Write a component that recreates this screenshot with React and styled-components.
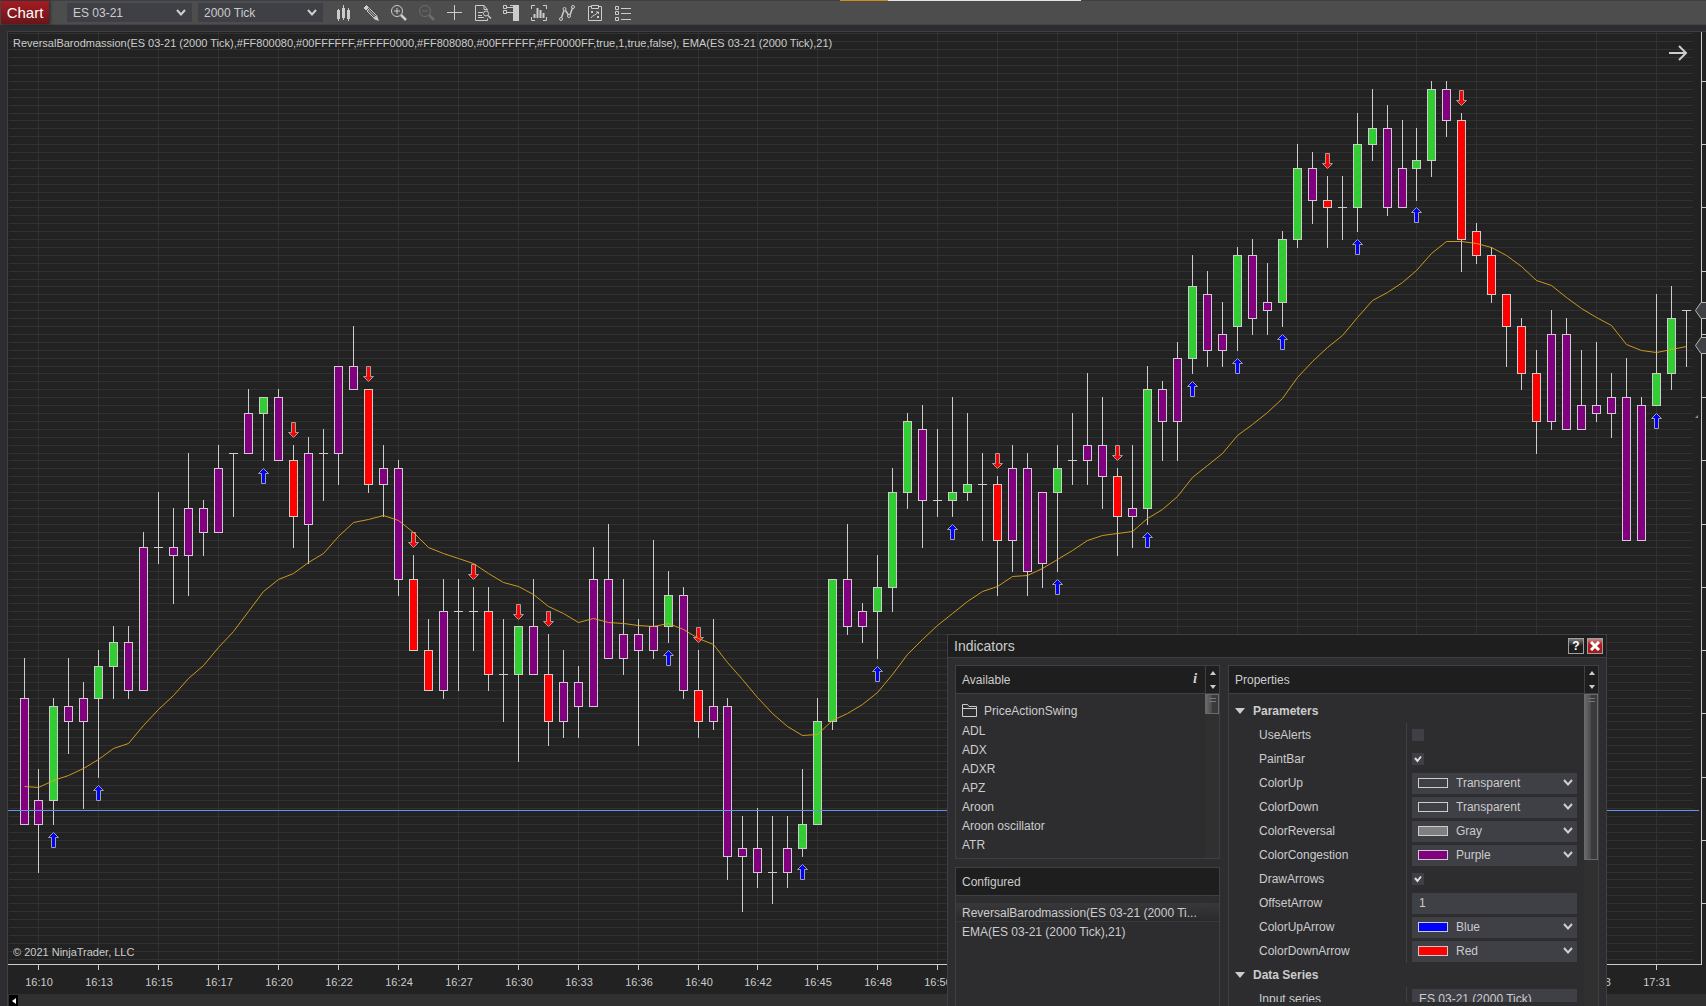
import React, { useState } from "react";
import styled, { createGlobalStyle, css } from "styled-components";

const GlobalStyle = createGlobalStyle`
    * {
        box-sizing: border-box;
    }

    body {
        margin: 0;
        overflow: hidden;
        background: #2d2d30;
        color: #cccccc;
        font-family: "Liberation Sans", Arial, sans-serif;
        font-size: 12px;
    }

    button, input, select {
        font: inherit;
        color: inherit;
    }
`;

const COLORS = { P: "#800080", G: "#32cd32", R: "#ff0000" };

// kind, high, body top, body bottom, low, arrow
const BARS = [
    ["P", 659, 698, 824, 824],
    ["P", 770, 800, 824, 873],
    ["G", 699, 706, 800, 824, "up"],
    ["P", 659, 706, 721, 754],
    ["P", 683, 698, 721, 809],
    ["G", 651, 666, 698, 778, "up"],
    ["G", 627, 642, 666, 699],
    ["P", 627, 642, 690, 699],
    ["P", 533, 547, 690, 690],
    ["D", 493, 547, 547, 564],
    ["P", 509, 547, 556, 604],
    ["P", 454, 508, 556, 596],
    ["P", 501, 508, 532, 556],
    ["P", 446, 468, 532, 532],
    ["D", 453, 453, 453, 517],
    ["P", 390, 413, 453, 453],
    ["G", 397, 397, 413, 461, "up"],
    ["P", 390, 397, 460, 460],
    ["R", 446, 460, 516, 548, "down"],
    ["P", 438, 453, 524, 564],
    ["D", 430, 453, 453, 501],
    ["P", 366, 366, 453, 485],
    ["P", 327, 366, 389, 389],
    ["R", 389, 389, 484, 492, "down"],
    ["P", 446, 468, 484, 517],
    ["P", 461, 468, 579, 596],
    ["R", 556, 579, 650, 650, "down"],
    ["R", 620, 650, 690, 690],
    ["P", 580, 611, 690, 699],
    ["D", 580, 611, 611, 691],
    ["D", 588, 611, 611, 651, "down"],
    ["R", 588, 611, 674, 691],
    ["D", 620, 674, 674, 722],
    ["G", 626, 626, 674, 762, "down"],
    ["P", 580, 626, 674, 674],
    ["R", 635, 674, 721, 746, "down"],
    ["P", 651, 682, 721, 738],
    ["P", 667, 682, 706, 738],
    ["P", 548, 579, 706, 706],
    ["P", 525, 579, 658, 658],
    ["P", 580, 634, 658, 675],
    ["P", 620, 634, 650, 746],
    ["P", 540, 626, 650, 659],
    ["G", 572, 595, 626, 643, "up"],
    ["P", 588, 595, 690, 699],
    ["R", 651, 690, 721, 738, "down"],
    ["P", 620, 706, 721, 730],
    ["P", 699, 706, 856, 881],
    ["P", 817, 848, 856, 912],
    ["P", 809, 848, 872, 888],
    ["D", 817, 872, 872, 904],
    ["P", 817, 848, 872, 888],
    ["G", 770, 824, 848, 857, "up"],
    ["G", 699, 721, 824, 824],
    ["G", 579, 579, 721, 730],
    ["P", 525, 579, 626, 635],
    ["P", 604, 611, 626, 642],
    ["G", 556, 587, 611, 659, "up"],
    ["G", 469, 492, 587, 612],
    ["G", 414, 421, 492, 509],
    ["P", 406, 429, 500, 548],
    ["D", 430, 500, 500, 517],
    ["G", 398, 492, 500, 517, "up"],
    ["G", 414, 484, 492, 501],
    ["D", 454, 484, 484, 540],
    ["R", 477, 484, 540, 596, "down"],
    ["P", 446, 468, 540, 572],
    ["P", 454, 468, 572, 596],
    ["P", 492, 492, 564, 588],
    ["G", 446, 468, 492, 572, "up"],
    ["D", 414, 460, 460, 485],
    ["P", 374, 445, 460, 485],
    ["P", 398, 445, 476, 509],
    ["R", 469, 476, 516, 556, "down"],
    ["P", 446, 508, 516, 548],
    ["G", 367, 389, 508, 525, "up"],
    ["P", 382, 389, 421, 461],
    ["P", 343, 358, 421, 461],
    ["G", 256, 286, 358, 374, "up"],
    ["P", 272, 294, 350, 367],
    ["P", 303, 334, 350, 367],
    ["G", 248, 255, 326, 351, "up"],
    ["P", 240, 255, 318, 335],
    ["P", 264, 302, 310, 335],
    ["G", 232, 239, 302, 327, "up"],
    ["G", 145, 168, 239, 248],
    ["P", 153, 168, 199, 224],
    ["R", 177, 199, 207, 248, "down"],
    ["D", 177, 207, 207, 240],
    ["G", 113, 144, 207, 232, "up"],
    ["G", 90, 128, 144, 161],
    ["P", 106, 128, 207, 216],
    ["P", 121, 168, 207, 207],
    ["G", 129, 160, 168, 200, "up"],
    ["G", 82, 89, 160, 177],
    ["P", 82, 89, 120, 137],
    ["R", 113, 120, 239, 272, "down"],
    ["R", 224, 231, 255, 264],
    ["R", 248, 255, 294, 303],
    ["R", 294, 294, 326, 367],
    ["R", 319, 326, 373, 390],
    ["R", 351, 373, 422, 454],
    ["P", 311, 334, 422, 430],
    ["P", 319, 334, 429, 429],
    ["P", 351, 405, 429, 429],
    ["P", 343, 405, 413, 422],
    ["P", 374, 397, 413, 438],
    ["P", 359, 397, 539, 539],
    ["P", 398, 405, 539, 539],
    ["G", 295, 373, 405, 405, "up"],
    ["G", 287, 318, 373, 390],
    ["D", 310, 310, 310, 367],
];

const EMA = [
    786, 787, 780, 775, 768, 759, 748, 743, 725, 709, 695, 678, 665, 647, 631, 611,
    591, 579, 573, 562, 553, 536, 522, 519, 515, 520, 532, 547, 553, 558, 563, 573,
    582, 586, 594, 606, 613, 622, 618, 622, 623, 625, 626, 623, 629, 638, 644, 662,
    679, 697, 713, 726, 735, 734, 720, 713, 704, 692, 674, 654, 639, 625, 613, 601,
    591, 586, 576, 575, 568, 559, 550, 540, 535, 533, 531, 518, 509, 496, 477, 465,
    453, 435, 424, 412, 398, 377, 361, 347, 335, 317, 300, 292, 282, 270, 253, 241,
    241, 243, 247, 255, 266, 280, 285, 297, 308, 317, 325, 344, 350, 352, 349, 346,
];

// one slot per vertical grid line, an empty slot has no label
const TIMES = [
    "16:10", "16:13", "16:15", "16:17", "16:20", "16:22", "16:24", "16:27", "16:30",
    "16:33", "16:36", "16:40", "16:42", "16:45", "16:48", "16:50", "", "", "", "",
    "", "", "", "", "", "", "17:23", "17:31",
];

const TICK = 7.9065;
const rowOf = (y) => Math.round((y - 81) / TICK);
const rowY = (row) => Math.floor(81.43 + TICK * row);
const barX = (i) => 24 + 15 * i - Math.ceil(i / 46);

const ROWS = Array.from({ length: 118 }, (_, i) => i - 6);
const COLUMNS = TIMES.map((time, i) => ({ time, x: barX(1 + i * 4) }));

const ArrowMark = ({ x, y, dir }) => (
    <path
        transform={`translate(${x + 0.5} ${y + 0.5}) scale(1 ${dir === "up" ? 1 : -1})`}
        d="M0 0 L5 5 H2 V15 H-2 V5 H-5 Z"
        fill={dir === "up" ? "#0000ff" : "#ff0000"}
        stroke="#a0a0a0"
        strokeWidth="1"
    />
);

const Candle = ({ x, bar }) => {
    const [kind, high, top, bottom, low, arrow] = bar;
    const [h, t, b, l] = [high, top, bottom, low].map((y) => rowY(rowOf(y)));

    return (
        <g>
            <path d={`M${x + 0.5} ${h} V${l + 1}`} stroke="#cccccc" shapeRendering="crispEdges" />
            {kind === "D" ? (
                <path d={`M${x - 4} ${t + 0.5} h9`} stroke="#cccccc" shapeRendering="crispEdges" />
            ) : (
                <rect x={x - 3.5} y={t + 0.5} width="8" height={b - t} fill={COLORS[kind]} stroke="#cccccc" shapeRendering="crispEdges" />
            )}
            {arrow === "up" && <ArrowMark x={x} y={rowY(rowOf(low) + 1)} dir="up" />}
            {arrow === "down" && <ArrowMark x={x} y={rowY(rowOf(high) - 1)} dir="down" />}
        </g>
    );
};

const PlotDrawing = () => (
    <PlotSvg role="img" aria-label="ES 03-21 price chart">
        <g transform="translate(-8 -32)">
            <g stroke="#313131" shapeRendering="crispEdges">
                {ROWS.map((row) => rowY(row) < 961 && (
                    <line key={row} x1="9" x2="100%" y1={rowY(row) + 0.5} y2={rowY(row) + 0.5} />
                ))}
                {COLUMNS.map(({ x }) => (
                    <line key={x} x1={x + 0.5} x2={x + 0.5} y1="32" y2="962" />
                ))}
            </g>
            {BARS.map((bar, i) => <Candle key={i} x={barX(i)} bar={bar} />)}
            <polyline
                points={EMA.map((y, i) => `${barX(i) + 0.5},${y + 0.5}`).join(" ")}
                fill="none"
                stroke="#daa520"
                strokeOpacity="0.9"
            />
            <path d="M8 810.5 H1699" stroke="#6495ed" shapeRendering="crispEdges" />
            <path d="M1695 418 L1698 415 V418 Z" fill="#9090a8" />
        </g>
    </PlotSvg>
);

const PriceAxis = () => (
    <PriceSvg aria-hidden="true">
        <g transform="translate(-1702 -32)">
            {ROWS.filter((row) => row % 8 === 0 && row >= 0).map((row) => (
                <path key={row} d={`M1702 ${rowY(row) + 0.5} h4`} stroke="#cccccc" />
            ))}
            {[310, 345].map((y) => (
                <path key={y} d={`M1710 ${y - 7.5} H1701 L1695.5 ${y + 0.5} L1701 ${y + 8.5} H1710`} fill="#3f3f46" stroke="#b8b8b8" />
            ))}
        </g>
    </PriceSvg>
);

const TimeAxis = () => (
    <TimeSvg>
        {COLUMNS.map(({ time, x }) => (
            <g key={x}>
                <path d={`M${x - 7.5} 0 V5`} stroke="#cccccc" />
                {time && <text x={x - 7} y="21" textAnchor="middle" fill="#cccccc" fontSize="11">{time}</text>}
            </g>
        ))}
    </TimeSvg>
);

const TOOLS = [
    {
        label: "Chart style",
        art: (
            <path
                fill="#cccccc"
                stroke="none"
                shapeRendering="crispEdges"
                d="M2 5h3v9h-3z M3 4h1v12h-1z M7 3h3v10h-3z M8 0h1v15h-1z M12 5h3v9h-3z M13 3h1v13h-1z"
            />
        ),
    },
    {
        label: "Drawing tools",
        art: (
            <>
                <path d="M1 3 L3.5 .5 L5.5 2.5 L3 5 Z" fill="#cccccc" />
                <path d="M4 6 L6.500 3.500 L13.500 10.500 L11 13 Z M5.500 5 L12 11.500" />
                <path d="M14 10.500 L16 16 L10.500 14 Z" fill="#cccccc" stroke="none" />
            </>
        ),
    },
    {
        label: "Zoom in",
        art: (
            <>
                <circle cx="6" cy="6" r="5.500" />
                <path d="M3 6h6 M6 3v6" />
                <path d="M10 10 L15 15" strokeWidth="2.500" />
            </>
        ),
    },
    {
        label: "Zoom out",
        dim: true,
        art: (
            <>
                <circle cx="6" cy="6" r="5.500" />
                <path d="M3 6h6" />
                <path d="M10 10 L15 15" strokeWidth="2.500" />
            </>
        ),
    },
    { label: "Crosshair", art: <path d="M0 7.500h15 M7.500 0v15" /> },
    {
        label: "Data box",
        art: (
            <>
                <path d="M12.500 5.500 V4.500 L9 .5 H.5 V15.500 H12.500 V13.500 M9 .5 V4.500 H12.500 M3 7.500h5 M3 10.500h4 M3 12.500h6" />
                <circle cx="11" cy="8.500" r="2.500" />
                <path d="M13 10.500 L16 13.500" strokeWidth="1.500" />
            </>
        ),
    },
    {
        label: "Chart trader",
        art: (
            <>
                <path d="M.5 .5h3v3h-3z M.5 5.500h3v3h-3z M4 2.500h6 M4 7.500h6" />
                <path d="M10 0h6v16h-6z M7 0h3v1h-3z" fill="#cccccc" stroke="none" />
            </>
        ),
    },
    {
        label: "Data series",
        art: (
            <>
                <path d="M4 .5H.5V4 M12 .5h3.500V4 M4 15.500H.5V12 M12 15.500h3.500V12" />
                <path d="M3.500 9v4 M6.500 3v10 M9.500 5v8 M12.500 8v5" strokeWidth="2" />
            </>
        ),
    },
    {
        label: "Indicators",
        art: (
            <>
                <path d="M2.500 12.500 L5 5.500 M6.500 5.500 L9.500 10 M11 10 L13.500 3" strokeWidth="1.500" />
                <circle cx="2" cy="14" r="1.500" />
                <circle cx="5.500" cy="4" r="1.500" />
                <circle cx="10" cy="11" r="1.500" />
                <circle cx="14" cy="2" r="1.500" />
            </>
        ),
    },
    {
        label: "Strategies",
        art: (
            <>
                <path d="M4 1.500H1.500V15.500H14.500V1.500H12 M4.500 3.500V.5H11.500V3.500Z" />
                <path d="M4 6l2 2 M6 6l-2 2 M10 11l2 2 M12 11l-2 2 M4 13 C5 10 10 10 11 7 M9 7h2.500v2" />
            </>
        ),
    },
    {
        label: "Properties",
        art: <path d="M.5 1.500h3v3h-3z M.5 6.500h3v3h-3z M.5 12.500h3v3h-3z M6 3.500h10 M6 8.500h10 M6 14.500h10" />,
    },
];

const Chevron = () => (
    <ChevronSvg viewBox="0 0 10 10" aria-hidden="true">
        <path d="M1 2 L5 6.500 L9 2" fill="none" stroke="#d0d0d0" strokeWidth="2" />
    </ChevronSvg>
);

const Scroller = ({ size }) => (
    <ScrollTrack>
        <ScrollThumb $size={size} />
    </ScrollTrack>
);

const Spinner = () => (
    <SpinBox>
        <SpinButton aria-label="Scroll up">
            <svg width="6" height="4"><path d="M0 4 L3 0 L6 4 Z" fill="#cccccc" /></svg>
        </SpinButton>
        <SpinButton aria-label="Scroll down">
            <svg width="6" height="4"><path d="M0 0 L3 4 L6 0 Z" fill="#cccccc" /></svg>
        </SpinButton>
    </SpinBox>
);

const PARAMETERS = [
    { name: "UseAlerts", type: "check", value: false },
    { name: "PaintBar", type: "check", value: true },
    { name: "ColorUp", type: "color", value: "Transparent" },
    { name: "ColorDown", type: "color", value: "Transparent" },
    { name: "ColorReversal", type: "color", value: "Gray" },
    { name: "ColorCongestion", type: "color", value: "Purple" },
    { name: "DrawArrows", type: "check", value: true },
    { name: "OffsetArrow", type: "text", value: "1" },
    { name: "ColorUpArrow", type: "color", value: "Blue" },
    { name: "ColorDownArrow", type: "color", value: "Red" },
];

const Property = ({ name, type, value }) => {
    const [current, setCurrent] = useState(value);

    return (
        <PropertyRow>
            <PropertyLabel htmlFor={name}>{name}</PropertyLabel>
            <PropertyValue>
                {type === "check" && (
                    <CheckWrap>
                        <CheckBox id={name} type="checkbox" checked={current} onChange={() => setCurrent(!current)} />
                        {current && (
                            <svg width="12" height="12" aria-hidden="true">
                                <path d="M3 5 L5.500 8 L9 3.500" fill="none" stroke="#e0e0e0" strokeWidth="2" />
                            </svg>
                        )}
                    </CheckWrap>
                )}
                {type === "text" && (
                    <TextField id={name} value={current} onChange={(e) => setCurrent(e.target.value)} />
                )}
                {type === "color" && (
                    <ColorField>
                        <Swatch $color={current} />
                        <select id={name} value={current} onChange={(e) => setCurrent(e.target.value)}>
                            {["Transparent", "Gray", "Purple", "Blue", "Red"].map((c) => <option key={c}>{c}</option>)}
                        </select>
                        <Chevron />
                    </ColorField>
                )}
            </PropertyValue>
        </PropertyRow>
    );
};

const GroupTitle = ({ children }) => (
    <GroupButton>
        <svg width="10" height="6" aria-hidden="true"><path d="M0 0 H10 L5 6 Z" fill="#cccccc" /></svg>
        {children}
    </GroupButton>
);

const IndicatorsDialog = () => (
    <Dialog role="dialog" aria-label="Indicators">
        <DialogTitle>
            <h2>Indicators</h2>
            <TitleButton aria-label="Help">?</TitleButton>
            <TitleButton $danger aria-label="Close">
                <svg width="10" height="10"><path d="M1 1 L9 9 M9 1 L1 9" stroke="#ffffff" strokeWidth="3" /></svg>
            </TitleButton>
        </DialogTitle>

        <DialogBody>
            <LeftColumn>
                <Panel>
                    <PanelHeader>
                        <h3>Available</h3>
                        <InfoButton aria-label="Information">i</InfoButton>
                        <Spinner />
                    </PanelHeader>
                    <PanelContent>
                        <List $height={164}>
                            <ListItem $folder>
                                <svg width="16" height="14" aria-hidden="true">
                                    <path d="M.5 12.500 V.5 H5.500 L7 2.500 H14.500 V12.500 Z M.5 4.500 H14.500" fill="none" stroke="#cccccc" />
                                </svg>
                                PriceActionSwing
                            </ListItem>
                            {["ADL", "ADX", "ADXR", "APZ", "Aroon", "Aroon oscillator", "ATR"].map((name) => (
                                <ListItem key={name}>{name}</ListItem>
                            ))}
                        </List>
                        <Scroller size={20} />
                    </PanelContent>
                </Panel>

                <Panel $grow>
                    <PanelHeader>
                        <h3>Configured</h3>
                    </PanelHeader>
                    <List $roomy>
                        <ListItem $selected>
                            <span>ReversalBarodmassion(ES 03-21 (2000 Ti...</span>
                        </ListItem>
                        <ListItem>EMA(ES 03-21 (2000 Tick),21)</ListItem>
                    </List>
                </Panel>
            </LeftColumn>

            <Panel $grow>
                <PanelHeader>
                    <h3>Properties</h3>
                    <Spinner />
                </PanelHeader>
                <PanelContent>
                    <PropertyList>
                        <GroupTitle>Parameters</GroupTitle>
                        {PARAMETERS.map((p) => <Property key={p.name} {...p} />)}
                        <GroupTitle>Data Series</GroupTitle>
                        <Property name="Input series" type="text" value="ES 03-21 (2000 Tick)" />
                    </PropertyList>
                    <Scroller size={166} />
                </PanelContent>
            </Panel>
        </DialogBody>
    </Dialog>
);

const App = () => {
    const [instrument, setInstrument] = useState("ES 03-21");
    const [interval, setBarInterval] = useState("2000 Tick");

    return (
        <Window>
            <GlobalStyle />
            <TopStrip>
                <i />
                <b />
            </TopStrip>

            <Toolbar>
                <ChartButton>Chart</ChartButton>
                <ToolSelect>
                    <select aria-label="Instrument" value={instrument} onChange={(e) => setInstrument(e.target.value)}>
                        <option>ES 03-21</option>
                    </select>
                    <Chevron />
                </ToolSelect>
                <ToolSelect>
                    <select aria-label="Interval" value={interval} onChange={(e) => setBarInterval(e.target.value)}>
                        <option>2000 Tick</option>
                    </select>
                    <Chevron />
                </ToolSelect>
                <Tools>
                    {TOOLS.map(({ label, art, dim }) => (
                        <ToolButton key={label} aria-label={label} $dim={dim}>
                            <svg width="16" height="16" fill="none" stroke="#cccccc">{art}</svg>
                        </ToolButton>
                    ))}
                </Tools>
            </Toolbar>

            <ChartFrame>
                <PlotRow>
                    <Plot>
                        <PlotDrawing />
                        <Legend>
                            ReversalBarodmassion(ES 03-21 (2000 Tick),#FF800080,#00FFFFFF,#FFFF0000,#FF808080,#00FFFFFF,#FF0000FF,true,1,true,false), EMA(ES 03-21 (2000 Tick),21)
                        </Legend>
                        <Copyright>© 2021 NinjaTrader, LLC</Copyright>
                        <JumpButton aria-label="Go to last bar">
                            <svg width="20" height="16" fill="none" stroke="#cccccc" strokeWidth="2">
                                <path d="M0 8 H17 M10 1 L17 8 L10 15" />
                            </svg>
                        </JumpButton>
                    </Plot>
                    <PriceAxis />
                </PlotRow>
                <TimeAxis />
                <BottomScroll>
                    <button aria-label="Scroll left">
                        <svg width="4" height="6"><path d="M4 0 L0 3 L4 6 Z" fill="#ffffff" /></svg>
                    </button>
                </BottomScroll>
            </ChartFrame>

            <IndicatorsDialog />
        </Window>
    );
};

const Window = styled.main`
    display: flex;
    flex-direction: column;
    height: 100vh;
    overflow: hidden;
`;

const TopStrip = styled.div`
    display: flex;
    flex: none;
    height: 1px;
    padding-left: 49.25%;
    background: #3f3f46;

    i {
        width: 48px;
        background: #d18b1f;
    }

    b {
        width: 193px;
        background: #e4e4e4;
    }
`;

const Toolbar = styled.header`
    display: flex;
    flex: none;
    align-items: center;
    height: 24px;
    padding-left: 1px;
    background: #4d4d4d;
    border-bottom: 1px solid #434347;
`;

const ChartButton = styled.button`
    width: 48px;
    height: 23px;
    margin-right: 18px;
    padding: 0;
    border: 0;
    background: linear-gradient(#a51c22, #69151a);
    box-shadow: 1px 0 3px #222222;
    color: #ffffff;
    font-size: 15px;
`;

const selectReset = css`
    select {
        flex: 1;
        min-width: 0;
        height: 100%;
        padding: 0;
        border: 0;
        outline: 0;
        appearance: none;
        background: transparent;
    }
`;

const ToolSelect = styled.div`
    display: flex;
    align-items: center;
    width: 125px;
    height: 19px;
    margin-right: 6px;
    padding: 0 6px;
    background: #3f3f46;
    ${selectReset}
`;

const ChevronSvg = styled.svg`
    flex: none;
    width: 10px;
    height: 10px;
    pointer-events: none;
`;

const Tools = styled.nav`
    display: flex;
    gap: 12px;
    margin-left: 6px;
`;

const ToolButton = styled.button`
    width: 16px;
    height: 16px;
    padding: 0;
    border: 0;
    background: none;
    opacity: ${({ $dim }) => ($dim ? 0.25 : 1)};

    svg {
        display: block;
        overflow: visible;
    }
`;

const ChartFrame = styled.section`
    display: flex;
    flex: 1;
    flex-direction: column;
    min-height: 0;
    margin: 6px 0 0 7px;
    border-left: 1px solid #3f3f46;
    border-top: 1px solid #3f3f46;
    background: #222222;
`;

const PlotRow = styled.div`
    display: flex;
    flex: 1;
    min-height: 0;
`;

const Plot = styled.div`
    position: relative;
    flex: 1;
    border-right: 1px solid #cccccc;
    border-bottom: 1px solid #cccccc;
    overflow: hidden;
`;

const PlotSvg = styled.svg`
    display: block;
    width: 100%;
    height: 100%;
`;

const PriceSvg = styled.svg`
    position: relative;
    flex: none;
    width: 4px;
    height: 100%;
    overflow: visible;
`;

const TimeSvg = styled.svg`
    display: block;
    flex: none;
    width: 100%;
    height: 29px;
`;

const Legend = styled.p`
    position: absolute;
    top: 4px;
    left: 5px;
    margin: 0;
    font-size: 11px;
    line-height: 14px;
    white-space: nowrap;
`;

const Copyright = styled.p`
    position: absolute;
    bottom: 5px;
    left: 5px;
    margin: 0;
    font-size: 11px;
    line-height: 14px;
`;

const JumpButton = styled.button`
    position: absolute;
    top: 13px;
    right: 12px;
    width: 20px;
    height: 16px;
    padding: 0;
    border: 0;
    background: none;

    svg {
        display: block;
    }
`;

const BottomScroll = styled.div`
    flex: none;
    height: 12px;
    padding: 1px;
    background: #303030;

    button {
        display: flex;
        align-items: center;
        justify-content: center;
        width: 9px;
        height: 11px;
        padding: 0;
        border: 0;
        background: #000000;
    }
`;

const Dialog = styled.section`
    position: fixed;
    top: 634px;
    right: 99px;
    bottom: 0;
    display: flex;
    flex-direction: column;
    width: 660px;
    border: 1px solid #3f3f46;
    border-bottom: 0;
    background: #2d2d30;
`;

const DialogTitle = styled.header`
    display: flex;
    flex: none;
    align-items: center;
    gap: 3px;
    height: 23px;
    padding: 0 3px 0 6px;
    border-bottom: 1px solid #3f3f46;
    background: #1e1e1e;

    h2 {
        flex: 1;
        margin: 0;
        font-size: 14px;
        font-weight: normal;
    }
`;

const TitleButton = styled.button`
    display: flex;
    align-items: center;
    justify-content: center;
    width: 16px;
    height: 16px;
    padding: 0;
    border: 1px solid #a0a0a0;
    background: ${({ $danger }) => ($danger
        ? "linear-gradient(#c98a8a, #b01c22 40%, #a01a1f)"
        : "linear-gradient(#777777, #1e1e1e 50%, #1e1e1e)")};
    color: #ffffff;
    font-weight: bold;
`;

const DialogBody = styled.div`
    display: grid;
    flex: 1;
    grid-template-columns: 265px 1fr;
    gap: 8px;
    min-height: 0;
    padding: 7px 7px 0;
`;

const LeftColumn = styled.div`
    display: flex;
    flex-direction: column;
    gap: 8px;
    min-height: 0;
`;

const Panel = styled.section`
    display: flex;
    flex: ${({ $grow }) => ($grow ? "1" : "none")};
    flex-direction: column;
    min-height: 0;
    border: 1px solid #3f3f46;
    border-bottom-width: ${({ $grow }) => ($grow ? "0" : "1px")};
`;

const PanelHeader = styled.header`
    display: flex;
    flex: none;
    align-items: center;
    height: 28px;
    padding-left: 6px;
    border-bottom: 1px solid #3f3f46;
    background: #1e1e1e;

    h3 {
        flex: 1;
        margin: 0;
        font-size: 12px;
        font-weight: normal;
    }
`;

const InfoButton = styled.button`
    width: 16px;
    height: 20px;
    padding: 0 0 4px;
    margin-right: 2px;
    border: 0;
    background: none;
    font-family: "Liberation Serif", serif;
    font-size: 15px;
    font-style: italic;
    font-weight: bold;
    line-height: 16px;
`;

const SpinBox = styled.div`
    display: flex;
    flex-direction: column;
    justify-content: space-between;
    width: 14px;
    height: 100%;
    border-left: 1px solid #3f3f46;
`;

const SpinButton = styled.button`
    display: flex;
    align-items: center;
    justify-content: center;
    height: 13px;
    padding: 0;
    border: 0;
    background: none;
`;

const PanelContent = styled.div`
    display: flex;
    flex: 1;
    min-height: 0;
`;

const ScrollTrack = styled.div`
    flex: none;
    width: 14px;
    background: #303030;
`;

const ScrollThumb = styled.div`
    height: ${({ $size }) => $size}px;
    border: 1px solid #6a6a6a;
    background:
        linear-gradient(#777777, #777777) 3px 3px / 7px 1px no-repeat,
        linear-gradient(#777777, #777777) 3px 6px / 7px 1px no-repeat,
        linear-gradient(90deg, #6a6a6a, #4a4a4a 50%, #3a3a3c 50%);
`;

const List = styled.ul`
    flex: 1;
    min-width: 0;
    height: ${({ $height }) => ($height ? `${$height}px` : "auto")};
    margin: 0;
    padding: ${({ $roomy }) => ($roomy ? "7px" : "6px")} 0 0;
    list-style: none;
`;

const ListItem = styled.li`
    display: flex;
    align-items: center;
    gap: 6px;
    height: ${({ $folder }) => ($folder ? "21px" : "19px")};
    padding: 0 6px;
    background: ${({ $selected }) => ($selected ? "linear-gradient(#38383a, #29292b)" : "none")};
    box-shadow: ${({ $selected }) => ($selected ? "inset 0 -1px #38383a" : "none")};

    span {
        white-space: nowrap;
    }
`;

const PropertyList = styled.div`
    flex: 1;
    margin-bottom: 4px;
    padding-top: 5px;
    overflow: hidden;
`;

const GroupButton = styled.button`
    display: flex;
    align-items: center;
    gap: 8px;
    width: 100%;
    height: 24px;
    padding: 0 6px;
    border: 0;
    background: none;
    font-weight: bold;
`;

const PropertyRow = styled.div`
    display: grid;
    grid-template-columns: 178px 1fr;
    height: 24px;
    padding-right: 7px;
`;

const PropertyLabel = styled.label`
    padding-left: 30px;
    border-right: 1px solid #3f3f46;
    line-height: 24px;
`;

const PropertyValue = styled.div`
    display: flex;
    align-items: center;
    padding-left: 5px;
`;

const CheckWrap = styled.div`
    position: relative;
    width: 12px;
    height: 12px;

    svg {
        position: absolute;
        top: 0;
        left: 0;
        pointer-events: none;
    }
`;

const CheckBox = styled.input`
    display: block;
    width: 12px;
    height: 12px;
    margin: 0;
    appearance: none;
    background: #3f3f46;
`;

const TextField = styled.input`
    width: 100%;
    height: 21px;
    padding: 0 7px;
    border: 0;
    background: #3f3f46;
`;

const ColorField = styled.div`
    display: flex;
    flex: 1;
    align-items: center;
    height: 21px;
    padding: 0 4px 0 6px;
    background: #3f3f46;
    ${selectReset}
`;

const Swatch = styled.span`
    width: 30px;
    height: 10px;
    margin-right: 8px;
    border: 1px solid #cccccc;
    background: ${({ $color }) => $color.toLowerCase()};
`;

export default App;
